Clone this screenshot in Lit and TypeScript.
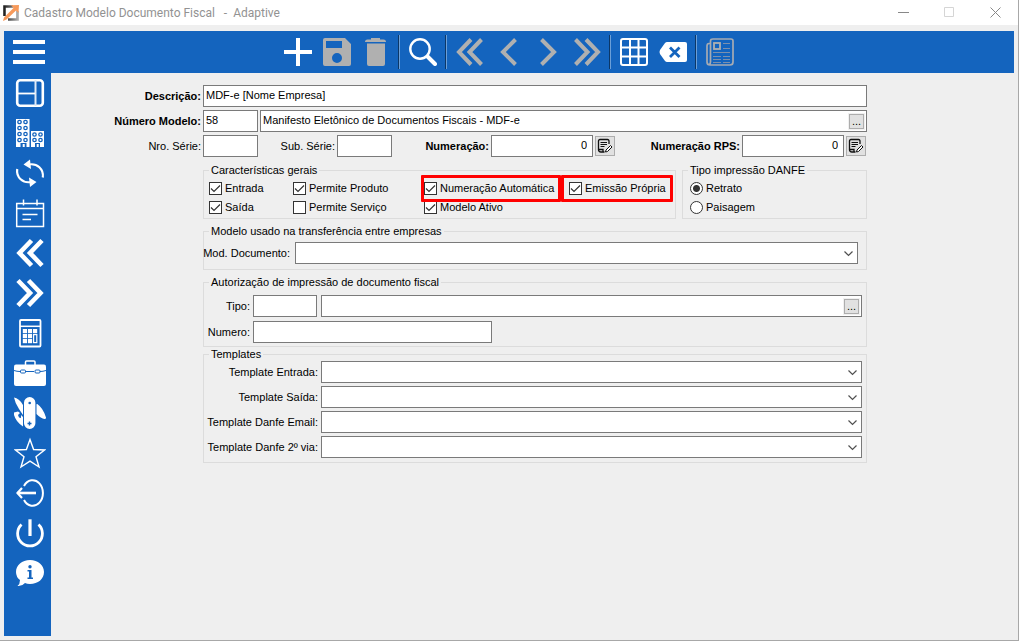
import { LitElement, html, css, svg } from "lit";
import { customElement } from "lit/decorators.js";

const BLUE = "#1464be";

const toolbarIcons: Record<string, unknown> = {
  add: svg`<path d="M12 0h4v12h12v4H16v12h-4V16H0v-4h12z" fill="#fff"/>`,
  save: svg`<path fill="#b0b0b0" fill-rule="evenodd" d="M2 0h20l6 6v20a2 2 0 0 1-2 2H2a2 2 0 0 1-2-2V2a2 2 0 0 1 2-2zM3 3v7h16V3zM14 15a5 5 0 1 0 0 10a5 5 0 0 0 0-10z"/>`,
  remove: svg`<path fill="#b0b0b0" d="M9 0h9v1.500h3.500q2.500 0 2.500 2.500H3q0-2.500 2.500-2.500H9zM5 5.500h18V26a2 2 0 0 1-2 2H7a2 2 0 0 1-2-2z"/>`,
  search: svg`<circle cx="11" cy="11" r="9.7" fill="none" stroke="#fff" stroke-width="2.4"/><path d="M18.500 18.500L26 26" stroke="#fff" stroke-width="4" stroke-linecap="round"/>`,
  first: svg`<path d="M15 1.500L3 14L15 26.500M25.500 1.500L13.500 14L25.500 26.500" fill="none" stroke="#b0b0b0" stroke-width="4"/>`,
  prev: svg`<path d="M20.500 1.500L8 14L20.500 26.500" fill="none" stroke="#b0b0b0" stroke-width="4"/>`,
  next: svg`<path d="M7.500 1.500L20 14L7.500 26.500" fill="none" stroke="#b0b0b0" stroke-width="4"/>`,
  last: svg`<path d="M2.500 1.500L14.500 14L2.500 26.500M13 1.500L25 14L13 26.500" fill="none" stroke="#b0b0b0" stroke-width="4"/>`,
  grid: svg`<rect x="1" y="1" width="26" height="26" rx="2" fill="none" stroke="#fff" stroke-width="2"/><path d="M10 1v26M18.500 1v26M1 9.500h26M1 18.500h26" stroke="#fff" stroke-width="2"/>`,
  clear: svg`<path fill="#fff" d="M8 4h18a2 2 0 0 1 2 2v16a2 2 0 0 1-2 2H8q-1 0-2-1L1 16q-1-2 0-4l5-7q1-1 2-1z"/><path d="M11 9.500l9.500 9.500M20.500 9.500L11 19" stroke="${BLUE}" stroke-width="2.800"/>`,
  news: svg`<path d="M4 5.500H3Q1 5.500 1 8v16q0 3 3 3h20q3 0 3-3V3q0-2-2-2H7Q4.500 1 4.500 3v21q0 2-1.500 3" fill="none" stroke="#a6abb3" stroke-width="1.700"/><rect x="8" y="5" width="6" height="6" fill="none" stroke="#b0b0b0" stroke-width="1.800"/><path d="M17 5.500h7M17 10.500h7M7 14.500h17M7 18.500h8M17 18.500h7M7 21.500h8M17 21.500h7M7 24.500h8M17 24.500h7" stroke="#7c90ad"/>`,
};

const ring = (x: number, y: number) => svg`<circle cx=${x} cy=${y} r="1.700" fill="none" stroke="${BLUE}" stroke-width="1.300"/>`;
const key = (x: number, y: number) => svg`<rect x=${x} y=${y} width="4.200" height="4.200" fill="#fff"/>`;

const sidebarItems: { label: string; icon: unknown }[] = [
  { label: "Painel", icon: svg`<rect x="3.200" y="3.200" width="25.600" height="25.600" rx="3" fill="none" stroke="#fff" stroke-width="2.600"/><path d="M21.500 3v26" stroke="#dfeaf7" stroke-width="2"/><path d="M3 16.500h18" stroke="#fff" stroke-width="1.800"/>` },
  { label: "Empresas", icon: svg`<path fill="#fff" d="M2 2h13.500v28h-3v-4h-6v4H2zM17 14h13v16h-4v-4h-5v4h-4zM8.700 27h2v3h-2zM22.700 27h2v3h-2z"/>${[5, 11, 17, 23].map((y) => [ring(5.5, y), ring(11.500, y)])}${[17.500, 23].map((y) => [ring(20.5, y), ring(26.500, y)])}` },
  { label: "Atualizar", icon: svg`<path d="M15 7.500C23 6 30 12 28.800 20.500M17 25C9 26.500 2 20.500 3.200 12" fill="none" stroke="#fff" stroke-width="2.200"/><path d="M9.500 7.500L16 2.500L17 12zM22.500 25L16 30L15 20.500z" fill="#fff"/>` },
  { label: "Calendário", icon: svg`<rect x="2.700" y="6.500" width="26.800" height="23" fill="none" stroke="#fff" stroke-width="1.500"/><path d="M2.500 11.500h27M9.500 2.500v6M23 2.500v6M8.500 17.500h15M8.500 22.500H17" stroke="#fff" stroke-width="1.500"/>` },
  { label: "Anterior", icon: svg`<path d="M17.500 3.500L5.500 16L17.500 28.500M28 3.500L16 16L28 28.500" fill="none" stroke="#fff" stroke-width="4.600"/>` },
  { label: "Próximo", icon: svg`<path d="M4 3.500L16 16L4 28.500M14.500 3.500L26.500 16L14.500 28.500" fill="none" stroke="#fff" stroke-width="4.600"/>` },
  { label: "Calculadora", icon: svg`<rect x="6" y="3" width="20.500" height="26.500" rx="1" fill="none" stroke="#fff" stroke-width="1.800"/><path d="M6 9.300h20" stroke="#fff" stroke-width="1.500"/>${[12, 17, 22].map((y) => [key(8.800, y), key(13.900, y)])}${key(19, 12)}<rect x="19.600" y="17.600" width="3.200" height="8" fill="none" stroke="#fff" stroke-width="1.200"/>` },
  { label: "Maleta", icon: svg`<path d="M11.500 8V5q0-1 1-1h7.500q1 0 1 1v3" fill="none" stroke="#fff" stroke-width="1.500"/><rect y="7.500" width="32" height="21.500" rx="2" fill="#fff"/><path d="M0 13.500q3 1 6 1M26 14.500q3 0 6-1M12 14.500h8" fill="none" stroke="${BLUE}"/><rect x="6.500" y="13" width="5" height="3" rx="1" fill="#fff" stroke="${BLUE}"/><rect x="21" y="13" width="5" height="3" rx="1" fill="#fff" stroke="${BLUE}"/>` },
  { label: "Ferramentas", icon: svg`<path fill="#fff" d="M10 5.700a5.700 5.700 0 0 1 11.400 0v20.600a5.700 5.700 0 0 1-11.400 0zM22.500 7.500q0-1 .8-.4Q29 11 32 20.500q.3 1.500-1.500 1.500-3.500-.3-8-5zM0 .500Q5 1 9 8v10L5 12Q1 6 0 .500zM0 15.500l4-1 2 1.500-2 2 1 2.500 2 .5V18l2 2v9.500Q2 25 0 18z"/><circle cx="15.700" cy="6" r="1.300" fill="${BLUE}"/><path d="M13.500 26.500h4M15.500 24.500v4" stroke="${BLUE}" stroke-width="1.400"/>` },
  { label: "Favoritos", icon: svg`<path d="M16 2.500L19.600 12.500L30.500 13L22 19.800L25 30L16 24.200L7 30L10 19.800L1.500 13L12.400 12.500z" fill="none" stroke="#fff" stroke-width="1.400"/>` },
  { label: "Sair", icon: svg`<path d="M10 9A10.300 12.800 0 1 1 10 23" fill="none" stroke="#fff" stroke-width="2"/><path d="M3.500 16H22" stroke="#fff" stroke-width="2.600"/><path d="M8 11L3.500 16L8 21" fill="none" stroke="#fff" stroke-width="2.200"/>` },
  { label: "Desligar", icon: svg`<path d="M16 2.300V19" stroke="#fff" stroke-width="3.200"/><path d="M7.500 7.500A12.400 12.400 0 1 0 24.500 7.500" fill="none" stroke="#fff" stroke-width="2.800"/>` },
  { label: "Informações", icon: svg`<path fill="#fff" d="M16 3C24 3 30 8 30 15S24 27 16 27q-3 0-5-1Q8 29.500 3.500 29Q6 27 6 23Q2 20 2 15C2 8 8 3 16 3z"/><circle cx="16" cy="9.700" r="1.700" fill="${BLUE}"/><path fill="${BLUE}" d="M13.500 13h4v7.500h1.500v1.500h-5.500v-1.500h1.500v-6h-1.500z"/>` },
];

@customElement("app-root")
export class AppRoot extends LitElement {
  static styles = css`
    :host {
      display: flex;
      flex-direction: column;
      min-height: 100vh;
      box-sizing: border-box;
      border-right: 1px solid #a8a8a8;
      border-bottom: 1px solid #a8a8a8;
      background: #efefef;
      color: #000;
      font: 11px/13px "Liberation Sans", Arial, sans-serif;
    }
    *, *::before, *::after { box-sizing: border-box; }
    button, input, select { font: inherit; color: inherit; margin: 0; border-radius: 0; }
    button { border: 0; padding: 0; background: none; }
    svg { display: block; }

    .titlebar {
      display: flex;
      align-items: center;
      height: 25px;
      padding-left: 3px;
      gap: 5px;
      background: #fff;
      color: #929292;
      font: 12px/16px Roboto, "Open Sans", sans-serif;
    }
    .title { flex: 1; margin: 0; font: inherit; white-space: pre; }
    .controls { display: flex; }
    .control { display: grid; place-items: center; width: 46px; height: 25px; }

    .frame {
      flex: 1;
      display: grid;
      grid-template: auto 1fr / 47px 1fr;
      padding: 6px 4px 4px;
    }
    .toolbar {
      grid-column: 1 / -1;
      display: grid;
      grid-template-columns: 1fr auto 1fr;
      align-items: center;
      height: 42px;
      padding: 0 9px;
      background: #1464be;
    }
    .menu { width: 32px; }
    .actions { display: flex; align-items: center; gap: 11px; }
    .divider {
      width: 3px;
      height: 34px;
      margin: 0 -3px;
      background: linear-gradient(90deg, #0b3768 1px, #6b9fd8 1px 2px, transparent 2px);
    }
    .sidebar {
      display: flex;
      flex-direction: column;
      gap: 8px;
      padding: 4px 0 0 10px;
      background: #1464be;
    }
    .side-button { width: 32px; height: 32px; }

    .form {
      display: grid;
      grid-template-columns: 150px minmax(0, 664px);
      align-content: start;
      align-items: center;
      gap: 3px 2px;
      margin: 0;
      padding-top: 12px;
    }
    .label { display: flex; justify-content: flex-end; white-space: nowrap; }
    .strong { font-weight: bold; }
    .field {
      width: 100%;
      min-width: 0;
      height: 22px;
      padding: 0 2px 2px;
      border: 1px solid #7a7a7a;
      background-color: #fff;
      outline: 0;
      appearance: none;
    }
    .number { padding-right: 5px; text-align: right; }
    .combo {
      background-image: url("data:image/svg+xml,%3Csvg xmlns='http://www.w3.org/2000/svg' width='9' height='6'%3E%3Cpath d='M.5 .5L4.500 4.500L8.500 .5' fill='none' stroke='%23505050' stroke-width='1.200'/%3E%3C/svg%3E");
      background-repeat: no-repeat;
      background-position: right 4px top 8px;
    }
    .lookup {
      display: flex;
      align-items: center;
      height: 22px;
      padding-right: 2px;
      border: 1px solid #7a7a7a;
      background: #fff;
    }
    .lookup-input {
      flex: 1;
      min-width: 0;
      height: 20px;
      padding: 0 2px 2px;
      border: 0;
      outline: 0;
      background: none;
    }
    .browse {
      width: 15px;
      height: 15px;
      border: 1px solid #adadad;
      background: #e1e1e1;
      line-height: 13px;
      box-shadow: 0 0 0 1px #f0f0f0;
    }
    .edit {
      display: grid;
      place-items: center;
      height: 20px;
      border: 1px solid #adadad;
      background: #e1e1e1;
    }
    .model { display: grid; grid-template-columns: 55px 1fr; gap: 2px; }
    .numbers {
      display: grid;
      grid-template-columns: 55px 75fr 55px 95fr 102px 20px 123fr 102px 20px;
      align-items: center;
      gap: 2px;
      padding-right: 1px;
    }

    .groups {
      grid-column: 2;
      display: flex;
      flex-direction: column;
      gap: 6px;
      padding-top: 4px;
    }
    .group {
      min-width: 0;
      margin: 0;
      padding: 2px 5px 1px;
      border: 1px solid #dcdcdc;
    }
    .legend { padding: 0 2px; line-height: 13px; }
    .options { display: grid; grid-template-columns: 473fr 185fr; gap: 6px; }
    .checks {
      display: grid;
      grid-template-columns: 84fr 131fr 145fr 101fr;
      grid-auto-rows: 19px;
    }
    .radios { display: grid; grid-auto-rows: 19px; padding-left: 2px; }
    .check { display: flex; align-items: center; gap: 3px; white-space: nowrap; }
    .box {
      flex: none;
      width: 13px;
      height: 13px;
      border: 1px solid #333;
      background: #fff center no-repeat;
      appearance: none;
    }
    .box:checked {
      background-image: url("data:image/svg+xml,%3Csvg xmlns='http://www.w3.org/2000/svg' width='11' height='11'%3E%3Cpath d='M1 5.500L4 8.500L10 2.500' fill='none' stroke='%23333' stroke-width='1.200'/%3E%3C/svg%3E");
    }
    .dot { border-radius: 50%; }
    .dot:checked { background-image: radial-gradient(circle, #333 3px, transparent 4px); }
    .marked { position: relative; }
    .marked::after {
      content: "";
      position: absolute;
      inset: -4px 8px -4px -3px;
      border: 3px solid #f00;
      border-radius: 1px;
      pointer-events: none;
    }
    .marked-end::after { inset: -4px -3px -4px -8px; }

    .transfer { padding: 4px 8px 5px 5px; }
    .transfer-row { display: grid; grid-template-columns: 81px 1fr; align-items: center; gap: 5px; }
    .authorization { padding: 6px 4px 3px 5px; }
    .authorization-grid {
      display: grid;
      grid-template-columns: 41px 64px 172px 1fr;
      align-items: center;
      gap: 4px 3px;
    }
    .wide { grid-column: span 2; margin-left: 1px; }
    .medium { grid-column: span 2; }
    .stack { display: flex; flex-direction: column; gap: 1px; }
    .templates { padding: 0 4px 4px 5px; }
    .templates-grid {
      display: grid;
      grid-template-columns: 109px 1fr;
      align-items: center;
      gap: 3px;
    }
  `;

  private toolButton(name: string, label: string) {
    return html`<button type="button" aria-label=${label}>
      <svg width="28" height="28" viewBox="0 0 28 28">${toolbarIcons[name]}</svg>
    </button>`;
  }

  private check(label: string, checked: boolean, extra = "") {
    return html`<label class="check ${extra}"><input class="box" type="checkbox" .checked=${checked} />${label}</label>`;
  }

  private radio(label: string, checked: boolean) {
    return html`<label class="check"><input class="box dot" type="radio" name="danfe" .checked=${checked} />${label}</label>`;
  }

  private editButton(label: string) {
    return html`<button class="edit" type="button" aria-label=${label}>
      <svg width="16" height="16" viewBox="0 0 16 16">
        <path d="M12 6V3q0-1.500-1.500-1.500H3Q1.500 1.500 1.500 3v8.500h4.500v2.500h1.500M1.500 11.500q0 2.500 2.500 2.500h2.500" fill="none" stroke="#111" stroke-width="1.300"/>
        <path d="M3.500 4.500h6.500M3.500 6.500h6.500M3.500 8.500h4" stroke="#111"/>
        <path d="M13.500 7.500l1.500 1.500-4.500 4.500-2 .5.500-2z" fill="#fff" stroke="#111"/>
      </svg>
    </button>`;
  }

  render() {
    const divider = html`<span class="divider"></span>`;
    const templates = ["Template Entrada:", "Template Saída:", "Template Danfe Email:", "Template Danfe 2º via:"];
    return html`
      <header class="titlebar">
        <svg width="16" height="16" viewBox="0 0 16 16">
          <defs><linearGradient id="frame" x1="0" y1="0" x2="1" y2="0"><stop offset="0" stop-color="#222"/><stop offset="1" stop-color="#aaa"/></linearGradient></defs>
          <path d="M10 1.500H1.500V11M5 14.500h9.500V6" fill="none" stroke="url(#frame)" stroke-width="2.600"/>
          <path d="M0 16L1 12.500L10.500 3L8 .3L16 0L15.500 8L13 5.500L3.500 14.500z" fill="#f79a5b"/>
        </svg>
        <h1 class="title">Cadastro Modelo Documento Fiscal   -  Adaptive</h1>
        <div class="controls">
          <button class="control" type="button" aria-label="Minimizar"><svg width="11" height="11"><path d="M0 5.500h11" stroke="#888"/></svg></button>
          <button class="control" type="button" aria-label="Maximizar"><svg width="11" height="11"><path d="M.5 .5h9v9h-9z" fill="none" stroke="#d5d5d5"/></svg></button>
          <button class="control" type="button" aria-label="Fechar"><svg width="11" height="11"><path d="M.5 .5l10 10M10.500 .5l-10 10" stroke="#888"/></svg></button>
        </div>
      </header>
      <div class="frame">
        <div class="toolbar">
          <button class="menu" type="button" aria-label="Menu">
            <svg width="32" height="24"><path d="M0 2h32M0 12h32M0 22h32" stroke="#fff" stroke-width="4"/></svg>
          </button>
          <div class="actions">
            ${this.toolButton("add", "Novo")}${this.toolButton("save", "Salvar")}${this.toolButton("remove", "Excluir")}
            ${divider}${this.toolButton("search", "Pesquisar")}${divider}
            ${this.toolButton("first", "Primeiro")}${this.toolButton("prev", "Anterior")}${this.toolButton("next", "Próximo")}${this.toolButton("last", "Último")}
            ${divider}${this.toolButton("grid", "Grade")}${this.toolButton("clear", "Limpar")}
            ${divider}${this.toolButton("news", "Relatório")}
          </div>
        </div>
        <nav class="sidebar">
          ${sidebarItems.map((item) => html`<button class="side-button" type="button" aria-label=${item.label}>
            <svg width="32" height="32" viewBox="0 0 32 32">${item.icon}</svg>
          </button>`)}
        </nav>
        <form class="form">
          <label class="label strong" for="descricao">Descrição:</label>
          <input class="field" id="descricao" type="text" value="MDF-e [Nome Empresa]" />

          <label class="label strong" for="modelo">Número Modelo:</label>
          <div class="model">
            <input class="field" id="modelo" type="text" value="58" />
            <div class="lookup">
              <input class="lookup-input" type="text" aria-label="Nome do modelo" value="Manifesto Eletônico de Documentos Fiscais - MDF-e" />
              <button class="browse" type="button" aria-label="Procurar modelo">...</button>
            </div>
          </div>

          <label class="label" for="serie">Nro. Série:</label>
          <div class="numbers">
            <input class="field" id="serie" type="text" />
            <label class="label" for="subserie">Sub. Série:</label>
            <input class="field" id="subserie" type="text" />
            <label class="label strong" for="numeracao">Numeração:</label>
            <input class="field number" id="numeracao" type="text" value="0" />
            ${this.editButton("Editar numeração")}
            <label class="label strong" for="rps">Numeração RPS:</label>
            <input class="field number" id="rps" type="text" value="0" />
            ${this.editButton("Editar numeração RPS")}
          </div>

          <div class="groups">
            <div class="options">
              <fieldset class="group">
                <legend class="legend">Características gerais</legend>
                <div class="checks">
                  ${this.check("Entrada", true)}${this.check("Permite Produto", true)}
                  ${this.check("Numeração Automática", true, "marked")}${this.check("Emissão Própria", true, "marked marked-end")}
                  ${this.check("Saída", true)}${this.check("Permite Serviço", false)}${this.check("Modelo Ativo", true)}
                </div>
              </fieldset>
              <fieldset class="group">
                <legend class="legend">Tipo impressão DANFE</legend>
                <div class="radios">${this.radio("Retrato", true)}${this.radio("Paisagem", false)}</div>
              </fieldset>
            </div>

            <fieldset class="group transfer">
              <legend class="legend">Modelo usado na transferência entre empresas</legend>
              <div class="transfer-row">
                <label class="label" for="documento">Mod. Documento:</label>
                <select class="field combo" id="documento"><option></option></select>
              </div>
            </fieldset>

            <div class="stack">
              <fieldset class="group authorization">
                <legend class="legend">Autorização de impressão de documento fiscal</legend>
                <div class="authorization-grid">
                  <label class="label" for="tipo">Tipo:</label>
                  <input class="field" id="tipo" type="text" />
                  <div class="lookup wide">
                    <input class="lookup-input" type="text" aria-label="Nome do tipo" />
                    <button class="browse" type="button" aria-label="Procurar tipo">...</button>
                  </div>
                  <label class="label" for="numero">Numero:</label>
                  <input class="field medium" id="numero" type="text" />
                </div>
              </fieldset>

              <fieldset class="group templates">
                <legend class="legend">Templates</legend>
                <div class="templates-grid">
                  ${templates.map((label, i) => html`<label class="label" for="template-${i}">${label}</label>
                    <select class="field combo" id="template-${i}"><option></option></select>`)}
                </div>
              </fieldset>
            </div>
          </div>
        </form>
      </div>
    `;
  }
}
